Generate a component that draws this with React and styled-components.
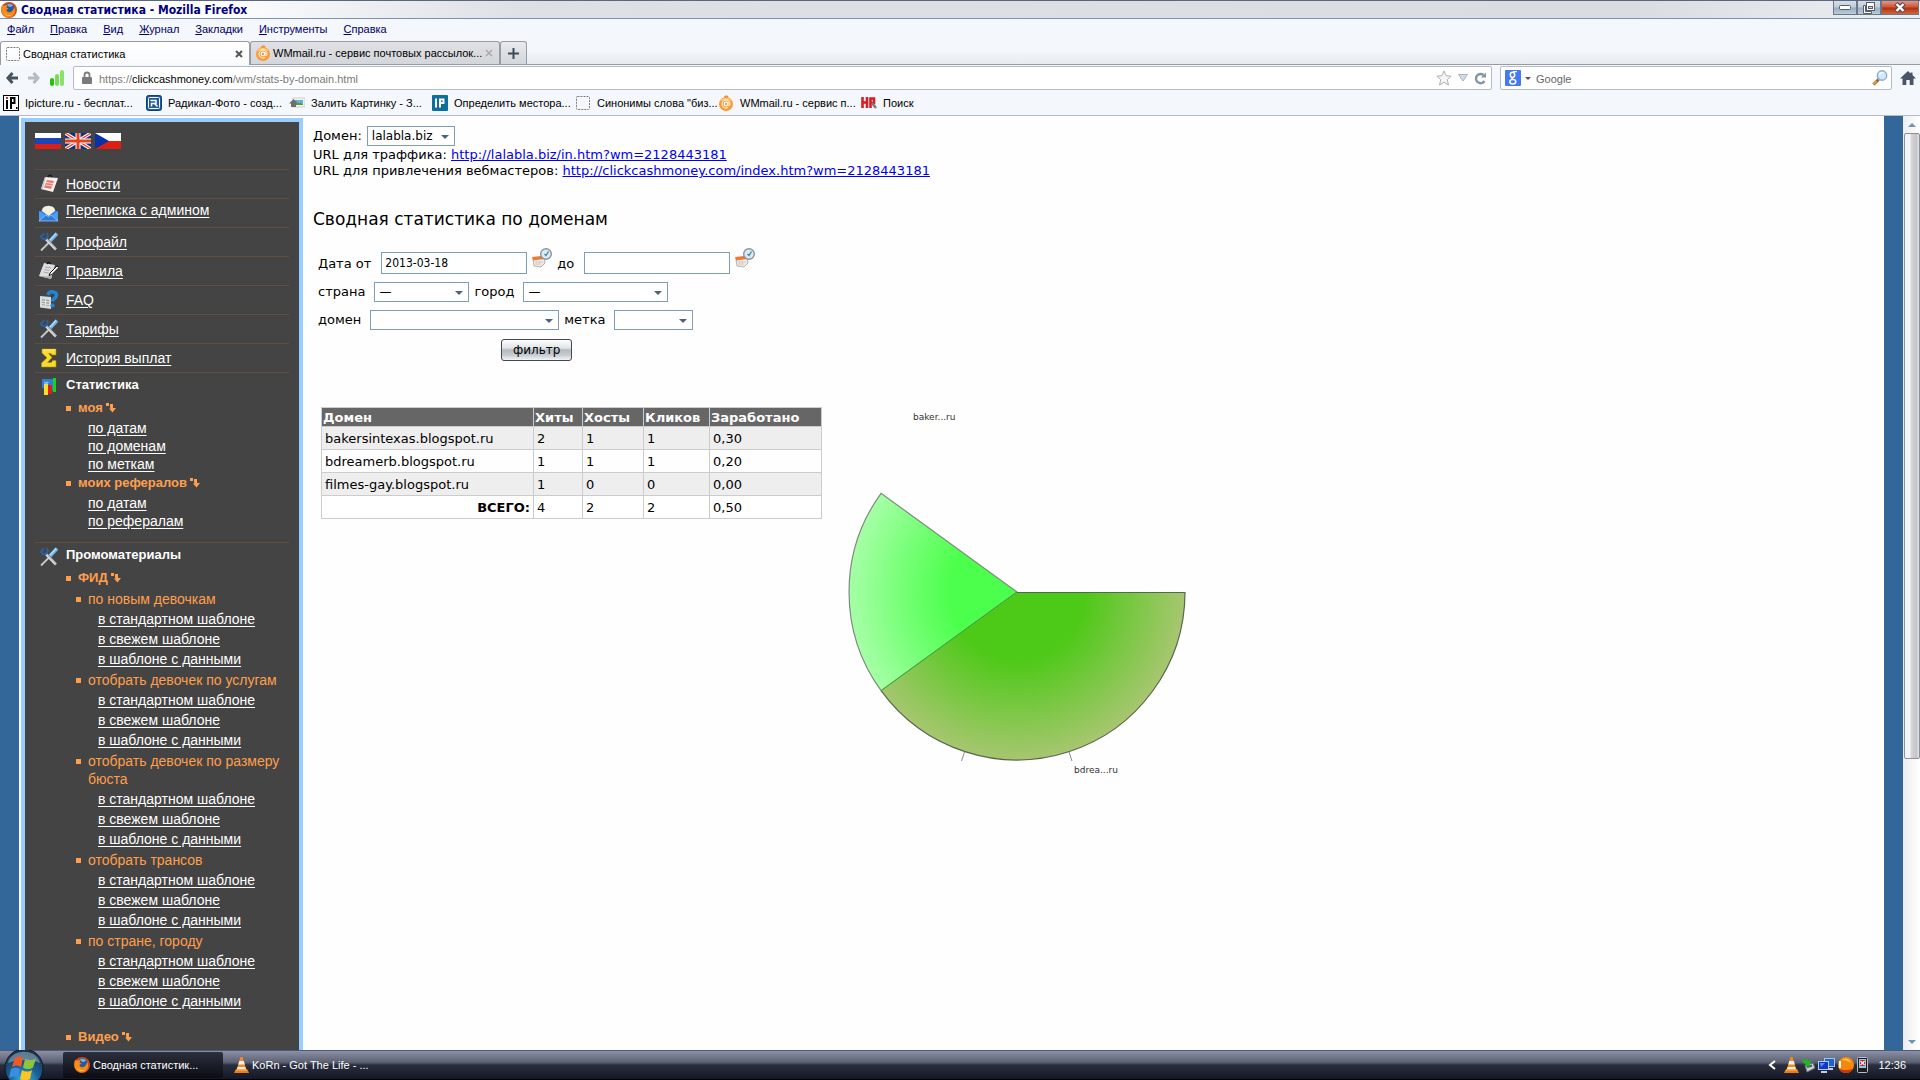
import styled, { createGlobalStyle, css } from "styled-components";

const App = () => {
  return (
    <>
      <GlobalStyle />
      <Screen>
        <BrowserHeader />
        <Viewport>
          <Strip />
          <Sidebar />
          <StatsPage />
          <Strip />
          <ScrollBar>
            <ScrollArrow $up />
            <ScrollThumb />
            <ScrollArrow />
          </ScrollBar>
        </Viewport>
        <WindowsTaskBar />
      </Screen>
    </>
  );
};

export default App;

/* ---------- data ---------- */

const MENU = ["Файл", "Правка", "Вид", "Журнал", "Закладки", "Инструменты", "Справка"];

const FEED_LINKS = ["в стандартном шаблоне", "в свежем шаблоне", "в шаблоне с данными"];

const FEED_GROUPS = [
  "по новым девочкам",
  "отобрать девочек по услугам",
  "отобрать девочек по размеру бюста",
  "отобрать трансов",
  "по стране, городу",
];

const ROWS = [
  ["bakersintexas.blogspot.ru", 2, 1, 1, "0,30"],
  ["bdreamerb.blogspot.ru", 1, 1, 1, "0,20"],
  ["filmes-gay.blogspot.ru", 1, 0, 0, "0,00"],
];

/* ---------- icons ---------- */

const FirefoxIcon = () => (
  <svg width="16" height="16" viewBox="0 0 16 16">
    <circle cx="8" cy="8" r="8" fill="#d9480f" />
    <circle cx="8.5" cy="6.5" r="5.2" fill="#27599f" />
    <path d="M6 2.5c2-1.500 5-.500 6 1l-2 1.500-2.500-.500z" fill="#6fb6e6" />
    <path
      d="M1 3c1 .5 1.500.8 2.500.8C4.500 3 5.500 3 6.500 3.300L5.500 5.500l2 1-2 1.300c0 2.200 2 3 4 2.200 2-.8 3.500-2.500 3.500-5.500 2 3 1.500 7-1 9.300C9.500 16.500 4 16 1.500 12 0 9.500 0 5.500 1 3z"
      fill="#f58a1d"
    />
    <path d="M2.500 9c1 3.500 4.500 5 8 3.800-2 2.400-6.500 1.600-8-3.800z" fill="#ffd24a" />
  </svg>
);

const BlankPageIcon = () => (
  <svg width="16" height="16" viewBox="0 0 16 16">
    <rect x="1.500" y="1.500" width="13" height="13" rx="1" fill="none" stroke="#7c7c7c" strokeDasharray="2 1" />
  </svg>
);

const MailRuIcon = () => (
  <svg width="16" height="16" viewBox="0 0 16 16">
    <path d="M6 1.500C7 0 10 0 10.500 1.500L9.500 3h-3z" fill="#f0902c" />
    <circle cx="8" cy="9" r="7" fill="#fb9b33" />
    <path d="M2 6c2-4 9-4 12 0-3-1-9-1-12 0z" fill="#ffd08a" />
    <circle cx="8" cy="9" r="1.800" fill="none" stroke="#fff" strokeWidth="1.200" />
    <path d="M10 7v3c.3 1.200 2 1 2-1A4 4 0 1 0 10 12.500" fill="none" stroke="#fff" strokeWidth="1" />
  </svg>
);

const BackIcon = ({ color }) => (
  <svg width="14" height="14" viewBox="0 0 14 14">
    <path d="M7.500 2 3 7l4.500 5M3 7h10" fill="none" stroke={color} strokeWidth="3" />
  </svg>
);

const ForwardIcon = ({ color }) => (
  <svg width="14" height="14" viewBox="0 0 14 14">
    <path d="M6.500 2 11 7l-4.500 5M11 7H1" fill="none" stroke={color} strokeWidth="3" />
  </svg>
);

const SignalIcon = () => (
  <svg width="16" height="18" viewBox="0 0 16 18">
    <rect x="1" y="9" width="4" height="8" rx="2" fill="#22c40a" />
    <rect x="6" y="5" width="4" height="12" rx="2" fill="#7bdc58" />
    <rect x="11" y="1" width="4" height="16" rx="2" fill="#8ce06c" />
  </svg>
);

const LockIcon = () => (
  <svg width="12" height="14" viewBox="0 0 12 14">
    <path d="M3.500 7V4a2.500 2.500 0 0 1 5 0v3" fill="none" stroke="#7d7d7d" strokeWidth="1.800" />
    <rect x="1" y="6" width="10" height="7" rx="1" fill="#7a7a7a" />
  </svg>
);

const StarIcon = () => (
  <svg width="16" height="16" viewBox="0 0 16 16">
    <path
      d="m8 1 2.100 4.700 5 .5-3.800 3.400L12.500 15 8 12.300 3.500 15l1.200-5.400L.9 6.200l5-.5z"
      fill="#f5f5f5"
      stroke="#b0b0b0"
    />
  </svg>
);

const DropIcon = () => (
  <svg width="10" height="8" viewBox="0 0 10 8">
    <path d="M.5.5h9L5 7z" fill="#d5dce6" stroke="#aab2be" />
  </svg>
);

const ReloadIcon = () => (
  <svg width="13" height="13" viewBox="0 0 13 13">
    <path d="M10.500 9A4.600 4.600 0 1 1 9.500 3" fill="none" stroke="#8695a3" strokeWidth="2.400" />
    <path d="M7 5.500h5V.5z" fill="#8695a3" />
  </svg>
);

const GoogleIcon = () => (
  <svg width="16" height="16" viewBox="0 0 16 16">
    <rect width="16" height="16" rx="1" fill="#4479f2" />
    <ellipse cx="7.500" cy="4.800" rx="2.200" ry="2.600" fill="none" stroke="#fff" strokeWidth="1.500" />
    <ellipse cx="7.800" cy="11.800" rx="3" ry="2.200" fill="none" stroke="#fff" strokeWidth="1.500" />
    <path d="M8 1.700h4M7 7.300c-.8 1 .5 1.700 1.500 2.300" fill="none" stroke="#fff" strokeWidth="1.200" />
  </svg>
);

const SearchIcon = () => (
  <svg width="16" height="16" viewBox="0 0 16 16">
    <path d="m1.500 14.500 5-5" stroke="#a35a1e" strokeWidth="3" />
    <path d="m1.500 14 3-3" stroke="#f19a3e" strokeWidth="2" />
    <circle cx="10" cy="5.500" r="4.700" fill="#cfe8fb" stroke="#8fa9c9" strokeWidth="1.400" />
    <path d="M7.500 5c.5-2 2-2.500 3.500-2" stroke="#fff" strokeWidth="1.400" fill="none" />
  </svg>
);

const HomeIcon = () => (
  <svg width="16" height="15" viewBox="0 0 16 15">
    <path d="M8 0 0 7.500h2.500V14h3.800V9h3.400v5h3.800V7.500H16L12.500 4V1.500h-2V2.500z" fill="#49566a" />
  </svg>
);

const IPictureIcon = () => (
  <svg width="16" height="16" viewBox="0 0 16 16">
    <rect x=".5" y=".5" width="15" height="15" fill="#fff" stroke="#000" />
    <path d="M4 5v9" stroke="#000" strokeWidth="2" />
    <rect x="3" y="2" width="2" height="2" fill="#e0202c" />
    <path d="M8 14V3h3.500v5H8" fill="none" stroke="#000" strokeWidth="2" />
    <path d="M13 13h1.500" stroke="#000" strokeWidth="2" />
  </svg>
);

const RadikalIcon = () => (
  <svg width="16" height="16" viewBox="0 0 16 16">
    <rect x=".5" y=".5" width="15" height="15" rx="2" fill="#1d5a9c" stroke="#0d3f78" />
    <rect x="2.500" y="2.500" width="11" height="11" rx="1" fill="none" stroke="#fff" />
    <path d="M4.500 5.500H10v3H5.500v3M8.500 8.500l3 3" fill="none" stroke="#fff" strokeWidth="1.500" />
  </svg>
);

const PictureIcon = () => (
  <svg width="16" height="16" viewBox="0 0 16 16">
    <rect x="4" y="3" width="12" height="9" fill="#f2f4ee" stroke="#cfd4cc" />
    <rect x="6" y="5" width="8" height="5" fill="#69aee0" />
    <path d="M6 10c2-3 6-2 8-1v1z" fill="#53a02c" />
    <path d="M0 8.500 4.500 4 9 8.500H7V12H2V8.500z" fill="#6a706a" />
  </svg>
);

const IpIcon = () => (
  <svg width="16" height="16" viewBox="0 0 16 16">
    <rect width="16" height="16" rx="1" fill="#0e6f9f" />
    <path d="M4 3.500v9M8 12.500v-8h3.500v3.500H8" fill="none" stroke="#fff" strokeWidth="2" />
  </svg>
);

const NrIcon = () => (
  <svg width="16" height="16" viewBox="0 0 16 16">
    <path d="M1.500 2v11M6 2v11M1.500 7.500H6M9.500 13V3.500h3.500V8h-3" fill="none" stroke="#dd1b22" strokeWidth="2.600" />
    <path d="m11 8 4 5" stroke="#7c7c7c" strokeWidth="2.500" />
  </svg>
);

const CalendarIcon = () => (
  <svg width="20" height="20" viewBox="0 0 20 20">
    <path d="M1 11 12 9l1 6-4 4-7-1z" fill="#efeae7" stroke="#a9a19c" strokeWidth=".8" />
    <path d="M0 9 9 8l4 1-1 2L1 12.500z" fill="#ef7a37" />
    <path d="M3.500 14h7M3.500 16h6" stroke="#bdb5b0" strokeDasharray="2 1" />
    <circle cx="14" cy="6" r="5.300" fill="#dfeaf0" stroke="#8595a1" strokeWidth="1.400" />
    <path d="m12.500 6 1.500 1.500L16.500 3.500" fill="none" stroke="#3e84a8" strokeWidth="1.300" />
  </svg>
);

const NewsIcon = () => (
  <svg width="20" height="20" viewBox="0 0 20 20">
    <path d="m6 3 13 1-5 14-12-3z" fill="#f6f1ee" />
    <path d="M2 15 6 3l1 0-3.500 12.500z" fill="#b9c4c8" />
    <path d="m8 6 7 1-3 8-7-1.500z" fill="#e9776f" />
    <path d="m7 8.500 7 1M6.500 11l6.500 1" stroke="#f9d8d4" />
    <path d="M9 3c1-2.500 3-2.500 4 0" stroke="#1c1c1c" strokeWidth="1.500" fill="none" />
  </svg>
);

const MailIcon = () => (
  <svg width="20" height="20" viewBox="0 0 20 20">
    <path d="M0 9 9.500 2 19 9v9H0z" fill="#2f7de0" />
    <path d="M3 8c0-4 3-5 6.500-5S16 4 16 8l-6.500 5z" fill="#f3f0d8" />
    <path d="m0 8 9.500 6L19 8v10H0z" fill="#4c9cf2" />
    <path d="m0 18 7-6L9.500 14l2.500-2 7 6z" fill="#2a7ae2" stroke="#9fd0ff" strokeWidth=".7" />
  </svg>
);

const ToolsIcon = () => (
  <svg width="20" height="20" viewBox="0 0 20 20">
    <path d="m2 18.500 9-9" stroke="#c4c9cf" strokeWidth="1.800" />
    <path d="m11 9 7-7.500" stroke="#6fb4ee" strokeWidth="3.500" />
    <path d="m11 8 6-6.500" stroke="#b8defa" strokeWidth="1.200" />
    <path d="m7 7 10 10.500" stroke="#b9bdc4" strokeWidth="2.600" />
    <path d="m7 8 9 9.500" stroke="#eceef0" />
    <path d="M1.500 4c1.500 0 3 0 3-3M7.500 1c2 2 1.500 4.500-.500 5.500S2.500 7 1.500 4" fill="none" stroke="#2c5f9e" strokeWidth="2" />
  </svg>
);

const RulesIcon = () => (
  <svg width="20" height="20" viewBox="0 0 20 20">
    <path d="m5 2 11 2-4 14L0 15z" fill="#dedede" />
    <path d="M0 15 12 18l1-3-2 .5z" fill="#a9a9a9" />
    <path d="m6 6 6 1M5.500 8.500l5 1M4.500 11l5 1" stroke="#a5a5a5" />
    <path d="m11 12 7-7 2 1.500-7 7-3 1z" fill="#f4f4f4" stroke="#111" />
    <path d="M8 3c1-2 2.500-2 3.500 0" stroke="#111" fill="none" strokeWidth="1.300" />
  </svg>
);

const FaqIcon = () => (
  <svg width="20" height="20" viewBox="0 0 20 20">
    <path d="m1 6 11 1v12L1 17.500z" fill="#d7dbd9" />
    <path d="m3 9 7 1v6l-7-1z" fill="#9da3a3" />
    <path d="m3 11 7 1M3 13.500l7 1M6.500 9.500v6" stroke="#e8eae9" />
    <path d="M9 5c1-4.500 9-4 8.500.5-.3 3-4 3-4 6" fill="none" stroke="#1f86d8" strokeWidth="3.500" />
    <circle cx="13.500" cy="15.500" r="2.100" fill="#1f86d8" />
  </svg>
);

const SigmaIcon = () => (
  <svg width="20" height="20" viewBox="0 0 20 20">
    <path d="M3 1h14v6h-4l-1-1.500H9.500L13 9.500l-4.500 5h4l1-2h3.500v6.500H2.500v-4L8 9.800 3 5z" fill="#f7dc2a" stroke="#b58d0c" strokeWidth=".6" />
    <path d="M3.500 2h13" stroke="#fff08a" />
  </svg>
);

const StatsIcon = () => (
  <svg width="20" height="20" viewBox="0 0 20 20">
    <path d="M3 2h12v12L3 11z" fill="#2f7fd6" />
    <path d="M5 4c2 2 3 0 5 1l-4 5z" fill="#7dc4f5" />
    <rect x="14" y="1" width="3" height="14" fill="#17d21f" />
    <rect x="9" y="8" width="4" height="9" fill="#dc1f17" />
    <rect x="5" y="7" width="4" height="11" fill="#f6e02a" />
  </svg>
);

const TurnIcon = () => (
  <svg width="10" height="10" viewBox="0 0 10 10">
    <path d="M0 0h3v3H0zM4 1h3v4h3L6.500 9.500 3 5.500h1.500L4 4z" fill="#ff9f4d" />
  </svg>
);

const RuFlag = () => (
  <svg width="26" height="16" viewBox="0 0 26 16">
    <path fill="#fff" d="M0 0h26v6H0z" />
    <path fill="#1e45b8" d="M0 5h26v6H0z" />
    <path fill="#dd1f12" d="M0 11h26v5H0z" />
  </svg>
);

const UkFlag = () => (
  <svg width="26" height="16" viewBox="0 0 26 16">
    <path fill="#12307e" d="M0 0h26v16H0z" />
    <path d="m0 0 26 16M26 0 0 16" stroke="#fff" strokeWidth="3.500" />
    <path d="m0 0 26 16M26 0 0 16" stroke="#e23b22" strokeWidth="1.200" />
    <path d="M13 0v16M0 8h26" stroke="#fff" strokeWidth="5" />
    <path d="M13 0v16M0 8h26" stroke="#e8401f" strokeWidth="3" />
  </svg>
);

const CzFlag = () => (
  <svg width="26" height="16" viewBox="0 0 26 16">
    <path fill="#fff" d="M0 0h26v8H0z" />
    <path fill="#dd1f12" d="M0 8h26v8H0z" />
    <path fill="#0b32a4" d="m0 0 14 8-14 8z" />
  </svg>
);

const VlcIcon = () => (
  <svg width="15" height="16" viewBox="0 0 15 16">
    <path d="M6.500 0h2l4 13h-10z" fill="#f58a1a" />
    <path d="m5.300 4-1 3.500h6.500l-1-3.500zM3.600 10l-.6 2.500h9l-.8-2.500z" fill="#eef0f2" />
    <path d="M1.500 12.500h12L15 16H0z" fill="#ee7c12" />
    <path d="M2 13h11" stroke="#ffbc5c" />
  </svg>
);

const StartOrb = () => (
  <svg width="40" height="30" viewBox="0 0 40 30">
    <defs>
      <radialGradient id="orb" cx="50%" cy="85%" r="80%">
        <stop offset="0" stopColor="#35c2f0" />
        <stop offset=".5" stopColor="#1c5f94" />
        <stop offset="1" stopColor="#1c3148" />
      </radialGradient>
    </defs>
    <circle cx="20" cy="18" r="19" fill="url(#orb)" stroke="#0c1828" />
    <path d="M4 13C7-2 33-2 36 13c-9-4-22-4-32 0z" fill="#8fa9bd" opacity=".6" />
    <path d="M11 8c3-2 5-2 8 0l-2 9c-3-2-6-2-9 0z" fill="#ee5a24" />
    <path d="M21 9c3 1.500 7 1.500 11-.500l-3 9c-3 2-7 2-10 0z" fill="#8cc63e" />
    <path d="M7 19c3-2 6-2 9 0l-2 9c-3-2-6-2-9 0z" fill="#3a8ee0" />
    <path d="M18 20c3 2 7 2 10 0l-2 9c-3 2-7 2-10 0z" fill="#fcc51f" />
  </svg>
);

const UsbIcon = () => (
  <svg width="13" height="16" viewBox="0 0 13 16">
    <path d="m3 8 8-2 2 5-8 4z" fill="#c9ccd2" stroke="#6c7078" />
    <path d="m5 10 5-1.500" stroke="#555" strokeWidth="2" />
    <path d="m0 2 3 1 2-2 1 3 3-1-1 6-5 1 1-3-3-1z" fill="#22b32a" />
  </svg>
);

const NetworkIcon = () => (
  <svg width="17" height="16" viewBox="0 0 17 16">
    <rect x="6.500" y="1.500" width="10" height="8" fill="#1f62d2" stroke="#a5c4e8" />
    <rect x=".5" y="4.500" width="10" height="8" fill="#1238c8" stroke="#b4ccec" />
    <path d="M2 6h5l-4 4z" fill="#5b8df0" />
    <path d="M3 15h6M11 12h4" stroke="#c6cedb" strokeWidth="2" />
  </svg>
);

const OrangeIcon = () => (
  <svg width="16" height="16" viewBox="0 0 16 16">
    <circle cx="8" cy="8" r="8" fill="#f8850c" />
    <path d="M1 11.500c3 6 11 6 14 0-4 2-10 2-14 0z" fill="#c8380c" />
    <path d="M4 3c4-3 8-1 9 3-3-2-6-3-9-3z" fill="#ffc93f" />
    <path d="M2 4v7" stroke="#fff" strokeWidth="2" />
  </svg>
);

const PhoneIcon = () => (
  <svg width="11" height="16" viewBox="0 0 11 16">
    <rect x=".5" y=".5" width="10" height="15" rx="1" fill="#1c1c1e" stroke="#b9bcc2" />
    <rect x="2" y="2" width="7" height="9" fill="#8fc4f5" />
    <rect x="3" y="3" width="5" height="6" fill="#d5161c" />
    <path d="m3.500 4 4 4M7.500 4l-4 4" stroke="#fff" strokeWidth="1.300" />
  </svg>
);

const BOOKMARKS = [
  [<IPictureIcon />, "Ipicture.ru - бесплат..."],
  [<RadikalIcon />, "Радикал-Фото - созд..."],
  [<PictureIcon />, "Залить Картинку - З..."],
  [<IpIcon />, "Определить местора..."],
  [<BlankPageIcon />, 'Синонимы слова "биз...'],
  [<MailRuIcon />, "WMmail.ru - сервис п..."],
  [<NrIcon />, "Поиск"],
];

const NAV = [
  [<NewsIcon />, "Новости"],
  [<MailIcon />, "Переписка с админом", true],
  [<ToolsIcon />, "Профайл"],
  [<RulesIcon />, "Правила"],
  [<FaqIcon />, "FAQ"],
  [<ToolsIcon />, "Тарифы"],
  [<SigmaIcon />, "История выплат"],
];

/* ---------- browser window ---------- */

const BrowserHeader = () => (
  <header>
    <TitleBar>
      <FirefoxIcon />
      <WindowTitle>Сводная статистика - Mozilla Firefox</WindowTitle>
      <WindowButtons>
        <WindowButton aria-label="Свернуть">
          <svg width="12" height="6" viewBox="0 0 12 6">
            <rect x=".5" y=".5" width="11" height="4" rx="1" fill="#fff" stroke="#555b6b" />
          </svg>
        </WindowButton>
        <WindowButton aria-label="Восстановить">
          <svg width="12" height="12" viewBox="0 0 12 12">
            <path d="M.5 3.500v8h8v-2h-6v-6z" fill="#fff" stroke="#555b6b" />
            <rect x="3.500" y=".5" width="8" height="8" fill="#fff" stroke="#555b6b" />
            <rect x="5.500" y="4.500" width="4" height="2" fill="#cfdae3" stroke="#555b6b" />
          </svg>
        </WindowButton>
        <WindowButton $close aria-label="Закрыть">
          <svg width="12" height="11" viewBox="0 0 12 11">
            <path d="m2 1.500 8 8M10 1.500l-8 8" stroke="#5b4750" strokeWidth="4.500" />
            <path d="m2.500 2 7 7M9.500 2l-7 7" stroke="#fff" strokeWidth="2.400" />
          </svg>
        </WindowButton>
      </WindowButtons>
    </TitleBar>

    <MenuBar>
      {MENU.map((name) => (
        <MenuItem key={name}>
          <u>{name[0]}</u>
          {name.slice(1)}
        </MenuItem>
      ))}
    </MenuBar>

    <TabBar>
      <Tab $active>
        <BlankPageIcon />
        <TabTitle>Сводная статистика</TabTitle>
        <TabClose aria-label="Закрыть вкладку">
          <svg width="8" height="8" viewBox="0 0 8 8">
            <path d="m1 1 6 6M7 1 1 7" stroke="#555" strokeWidth="2" />
          </svg>
        </TabClose>
      </Tab>
      <Tab>
        <MailRuIcon />
        <TabTitle>WMmail.ru - сервис почтовых рассылок...</TabTitle>
        <TabClose aria-label="Закрыть вкладку">
          <svg width="8" height="8" viewBox="0 0 8 8">
            <path d="m1 1 6 6M7 1 1 7" stroke="#aaa" strokeWidth="1.500" />
          </svg>
        </TabClose>
      </Tab>
      <NewTab aria-label="Новая вкладка">
        <svg width="11" height="11" viewBox="0 0 11 11">
          <path d="M5.500 0v11M0 5.500h11" stroke="#3c4a5e" strokeWidth="2" />
        </svg>
      </NewTab>
    </TabBar>

    <NavBar>
      <NavButtons>
        <IconButton aria-label="Назад">
          <BackIcon color="#46535f" />
        </IconButton>
        <IconButton aria-label="Вперёд">
          <ForwardIcon color="#b4bbc3" />
        </IconButton>
        <SignalIcon />
      </NavButtons>
      <UrlBox>
        <LockIcon />
        <UrlText role="textbox" aria-label="Адрес">
          https://<b>clickcashmoney.com</b>/wm/stats-by-domain.html
        </UrlText>
        <StarIcon />
        <DropIcon />
        <ReloadIcon />
      </UrlBox>
      <SearchBox>
        <GoogleIcon />
        <SmallArrow />
        <SearchInput aria-label="Поиск" placeholder="Google" />
        <SearchIcon />
      </SearchBox>
      <IconButton aria-label="Домой">
        <HomeIcon />
      </IconButton>
    </NavBar>

    <BookmarkBar>
      {BOOKMARKS.map(([icon, name]) => (
        <Bookmark key={name} href="#">
          {icon}
          {name}
        </Bookmark>
      ))}
    </BookmarkBar>
  </header>
);

/* ---------- left menu ---------- */

const Sidebar = () => (
  <SidebarBox>
    <Flags>
      <RuFlag />
      <UkFlag />
      <CzFlag />
    </Flags>
    {NAV.map(([icon, name, raised]) => (
      <NavRow key={name}>
        {icon}
        <NavLink href="#" $raised={raised}>
          {name}
        </NavLink>
      </NavRow>
    ))}

    <Section>
      <StatsIcon />
      <div>
        <SectionTitle>Статистика</SectionTitle>
        <SubTitle>
          моя <TurnIcon />
        </SubTitle>
        <SubList>
          <NavLink href="#">по датам</NavLink>
          <NavLink href="#">по доменам</NavLink>
          <NavLink href="#">по меткам</NavLink>
        </SubList>
        <SubTitle>
          моих рефералов <TurnIcon />
        </SubTitle>
        <SubList>
          <NavLink href="#">по датам</NavLink>
          <NavLink href="#">по рефералам</NavLink>
        </SubList>
      </div>
    </Section>

    <Section>
      <ToolsIcon />
      <div>
        <SectionTitle>Промоматериалы</SectionTitle>
        <SubTitle>
          ФИД <TurnIcon />
        </SubTitle>
        <FeedList>
          {FEED_GROUPS.map((group) => (
            <div key={group}>
              <FeedTitle>{group}</FeedTitle>
              {FEED_LINKS.map((link) => (
                <FeedLink key={link} href="#">
                  {link}
                </FeedLink>
              ))}
            </div>
          ))}
        </FeedList>
        <SubTitle>
          Видео <TurnIcon />
        </SubTitle>
      </div>
    </Section>
  </SidebarBox>
);

/* ---------- page ---------- */

const SelectField = ({ id, label, value, width, site }) => (
  <Field $site={site}>
    <label htmlFor={id}>{label}</label>
    <SelectWrap $width={width}>
      <Select id={id} defaultValue={value}>
        <option>{value}</option>
      </Select>
    </SelectWrap>
  </Field>
);

const DateField = ({ id, label, value }) => (
  <DateRow>
    <label htmlFor={id}>{label}</label>
    <TextInput id={id} type="text" defaultValue={value} />
    <DateButton type="button" aria-label="Календарь">
      <CalendarIcon />
    </DateButton>
  </DateRow>
);

const StatsPage = () => (
  <Main>
    <SelectField site id="site" label="Домен:" value="lalabla.biz" width={88} />
    <Line>
      URL для траффика: <a href="#in">http://lalabla.biz/in.htm?wm=2128443181</a>
    </Line>
    <Line>
      URL для привлечения вебмастеров: <a href="#wm">http://clickcashmoney.com/index.htm?wm=2128443181</a>
    </Line>
    <Heading>Сводная статистика по доменам</Heading>

    <Filter>
      <FilterRow>
        <DateField id="from" label="Дата от" value="2013-03-18" />
        <DateField id="to" label="до" value="" />
      </FilterRow>
      <FilterRow>
        <SelectField id="country" label="страна" value="—" width={95} />
        <SelectField id="city" label="город" value="—" width={145} />
      </FilterRow>
      <FilterRow>
        <SelectField id="domain" label="домен" value="" width={189} />
        <SelectField id="mark" label="метка" value="" width={79} />
      </FilterRow>
      <FilterButton type="button">фильтр</FilterButton>
    </Filter>

    <Results>
      <Table>
        <colgroup>
          <Col $width={212} />
          <Col $width={49} />
          <Col $width={61} />
          <Col $width={66} />
          <Col $width={112} />
        </colgroup>
        <thead>
          <tr>
            {["Домен", "Хиты", "Хосты", "Кликов", "Заработано"].map((name) => (
              <Th key={name}>{name}</Th>
            ))}
          </tr>
        </thead>
        <tbody>
          {ROWS.map((row) => (
            <Tr key={row[0]}>
              {row.map((cell, i) => (
                <Td key={i}>{cell}</Td>
              ))}
            </Tr>
          ))}
          <Tr>
            <Td $total>ВСЕГО:</Td>
            <Td>4</Td>
            <Td>2</Td>
            <Td>2</Td>
            <Td>0,50</Td>
          </Tr>
        </tbody>
      </Table>
      <PieChart />
    </Results>
  </Main>
);

const PieChart = () => (
  <Chart width="370" height="375" viewBox="0 0 370 375">
    <defs>
      <radialGradient id="light" gradientUnits="userSpaceOnUse" cx="185" cy="185" r="168">
        <stop offset=".4" stopColor="#4cff4c" />
        <stop offset="1" stopColor="#a6ffa6" />
      </radialGradient>
      <radialGradient id="olive" gradientUnits="userSpaceOnUse" cx="185" cy="185" r="168">
        <stop offset=".4" stopColor="#4dc917" />
        <stop offset="1" stopColor="#a7c670" />
      </radialGradient>
    </defs>
    <path d="M185 185 49.100 283.700A168 168 0 0 1 49.100 86.300z" fill="url(#light)" stroke="#7c8c7c" strokeWidth="1.200" />
    <path d="M185 185.500H353A168 168 0 0 1 49.100 283.700z" fill="url(#olive)" />
    <path d="M185 185.500H353A168 168 0 0 1 49.100 283.700" fill="none" stroke="#56684a" strokeWidth="1.200" />
    <path d="M49.100 283.700 185 185" stroke="#2fae2a" />
    <path d="m132.500 345-3 9M237 345l3 9" stroke="#8a8a8a" />
    <text x="81" y="13">baker...ru</text>
    <text x="242" y="366">bdrea...ru</text>
  </Chart>
);

/* ---------- taskbar ---------- */

const WindowsTaskBar = () => (
  <TaskBar>
    <StartButton aria-label="Пуск">
      <StartOrb />
    </StartButton>
    <TaskButton $active>
      <FirefoxIcon />
      Сводная статистик...
    </TaskButton>
    <TaskButton>
      <VlcIcon />
      KoRn - Got The Life - ...
    </TaskButton>
    <Tray>
      <svg width="8" height="10" viewBox="0 0 8 10">
        <path d="M7 1 2 5l5 4" fill="none" stroke="#fff" strokeWidth="2" />
      </svg>
      <TrayIcons>
        <VlcIcon />
        <UsbIcon />
        <NetworkIcon />
        <OrangeIcon />
        <PhoneIcon />
      </TrayIcons>
      <time>12:36</time>
    </Tray>
  </TaskBar>
);

/* ---------- styles ---------- */

const GlobalStyle = createGlobalStyle`
  * {
    box-sizing: border-box;
  }
  body {
    margin: 0;
    overflow: hidden;
    background: #fefefe;
  }
  svg {
    display: block;
    flex: none;
  }
  button {
    padding: 0;
    border: 0;
    background: none;
    font: inherit;
  }
`;

const chromeFont = css`
  font: 11px/14px "Liberation Sans", Arial, sans-serif;
`;

const pageFont = css`
  font: 13px/16px "DejaVu Sans", Verdana, sans-serif;
`;

const flexAlignCenter = css`
  display: flex;
  align-items: center;
`;

const Screen = styled.div`
  display: flex;
  flex-direction: column;
  height: 100vh;
  ${chromeFont};
`;

const TitleBar = styled.div`
  ${flexAlignCenter};
  height: 19px;
  padding: 0 1px;
  border-top: 1px solid #5a6680;
  border-bottom: 1px solid #7893b5;
  background: linear-gradient(90deg, #fff 0, #fff 200px, #dde0e5 520px, #d9dde2 85%, #eceef1 100%);
`;

const WindowTitle = styled.span`
  flex: 1;
  padding-left: 4px;
  font: bold 12px/16px "DejaVu Sans Condensed", sans-serif;
  color: #000080;
`;

const WindowButtons = styled.div`
  display: flex;
  align-self: flex-start;
`;

const WindowButton = styled.button`
  display: flex;
  align-items: center;
  justify-content: center;
  width: ${({ $close }) => ($close ? 38 : 24)}px;
  height: 14px;
  border: 1px solid #6b7786;
  border-top: 0;
  background: ${({ $close }) =>
    $close
      ? "linear-gradient(#dd9a8c, #cf5638 45%, #b52f12 55%, #cc6a3e)"
      : "linear-gradient(#d5dee6, #c0cfdb 45%, #98aec2 55%, #b9cddb)"};
`;

const MenuBar = styled.nav`
  ${flexAlignCenter};
  gap: 16px;
  height: 22px;
  padding: 0 7px 2px;
  background: #f4f7fc;
`;

const MenuItem = styled.button`
  color: #000066;
`;

const TabBar = styled.div`
  display: flex;
  align-items: stretch;
  height: 24px;
  border-bottom: 1px solid #989ba2;
  background: linear-gradient(#f4f7fc 40%, #e7eaee);
`;

const Tab = styled.div`
  ${flexAlignCenter};
  gap: 2px;
  width: 250px;
  padding: 0 6px 0 4px;
  border: 1px solid #989ba2;
  border-bottom: 0;
  border-radius: 3px 3px 0 0;
  margin-bottom: ${({ $active }) => ($active ? -1 : 0)}px;
  background: ${({ $active }) => ($active ? "linear-gradient(#fff, #f8fafd)" : "linear-gradient(#dfe1e4, #d3d6da)")};
`;

const TabTitle = styled.span`
  flex: 1;
  min-width: 0;
  white-space: nowrap;
`;

const TabClose = styled.button`
  flex: none;
`;

const NewTab = styled.button`
  ${flexAlignCenter};
  justify-content: center;
  width: 27px;
  border: 1px solid #989ba2;
  border-bottom: 0;
  border-radius: 3px 3px 0 0;
  background: linear-gradient(#e8eaed, #d3d6da);
`;

const NavBar = styled.div`
  ${flexAlignCenter};
  gap: 8px;
  height: 26px;
  padding: 0 4px 0 5px;
  background: #f4f7fc;
`;

const NavButtons = styled.div`
  ${flexAlignCenter};
  gap: 8px;
  width: 60px;
`;

const IconButton = styled.button`
  display: block;
`;

const UrlBox = styled.div`
  ${flexAlignCenter};
  gap: 6px;
  flex: 1;
  height: 24px;
  padding: 0 4px 0 7px;
  border: 1px solid #b4bccb;
  border-radius: 2px;
  background: #fff;
`;

const UrlText = styled.div`
  flex: 1;
  padding-top: 2px;
  color: #7a7a7a;

  b {
    font-weight: normal;
    color: #000;
  }
`;

const SearchBox = styled.div`
  ${flexAlignCenter};
  gap: 4px;
  width: 392px;
  height: 24px;
  padding: 0 3px 0 4px;
  border: 1px solid #b4bccb;
  border-radius: 2px;
  background: #fff;
`;

const SmallArrow = styled.span`
  border: 3px solid transparent;
  border-top-color: #555;
  border-bottom: 0;
`;

const SearchInput = styled.input`
  flex: 1;
  border: 0;
  outline: 0;
  padding: 2px 1px 0;
  font: inherit;

  &::placeholder {
    color: #666;
    opacity: 1;
  }
`;

const BookmarkBar = styled.div`
  ${flexAlignCenter};
  height: 25px;
  padding: 0 3px;
  border-bottom: 1px solid #b4bccb;
  background: #f4f7fc;
`;

const Bookmark = styled.a`
  ${flexAlignCenter};
  gap: 6px;
  width: 143px;
  color: #000;
  text-decoration: none;
  white-space: nowrap;
`;

const Viewport = styled.div`
  display: flex;
  flex: 1;
  min-height: 0;
`;

const Strip = styled.div`
  flex: none;
  width: 19px;
  background: #336699;
`;

const SidebarBox = styled.aside`
  flex: none;
  width: 282px;
  margin: 2px 0 0 2px;
  padding: 11px 10px 0;
  border: 4px solid #99ccff;
  border-bottom: 0;
  background: #444;
  font: 14px/18px "Liberation Sans", Arial, sans-serif;
  color: #fff;
  overflow: hidden;
`;

const Flags = styled.div`
  display: flex;
  gap: 4px;
  margin-bottom: 20px;
`;

const NavRow = styled.div`
  ${flexAlignCenter};
  gap: 7px;
  height: 29px;
  padding-left: 4px;
  border-top: 1px solid #5f4e46;
`;

const NavLink = styled.a`
  display: block;
  color: #fff;
  text-underline-offset: 2px;
  margin-bottom: ${({ $raised }) => ($raised ? 6 : 0)}px;
`;

const Section = styled.section`
  display: flex;
  align-items: flex-start;
  gap: 7px;
  padding: 3px 0 11px 4px;
  border-top: 1px solid #5f4e46;

  > svg {
    margin-top: 1px;
  }
`;

const SectionTitle = styled.h2`
  height: 23px;
  margin: 0;
  font: bold 13px/18px "Liberation Sans", Arial, sans-serif;
`;

const SubTitle = styled.h3`
  ${flexAlignCenter};
  gap: 3px;
  margin: 0 0 2px;
  font: bold 13px/18px "Liberation Sans", Arial, sans-serif;
  color: #ff9f4d;

  &::before {
    content: "";
    width: 5px;
    height: 5px;
    margin-right: 4px;
    background: #ff9f4d;
  }
`;

const SubList = styled.div`
  padding: 0 0 1px 22px;
`;

const FeedList = styled.div`
  display: flex;
  flex-direction: column;
  gap: 2px;
  padding: 1px 0 17px 22px;
`;

const FeedTitle = styled.div`
  display: flex;
  align-items: flex-start;
  gap: 7px;
  margin: 0 0 1px -12px;
  color: #ff9f4d;

  &::before {
    content: "";
    flex: none;
    width: 5px;
    height: 5px;
    margin-top: 7px;
    background: #ff9f4d;
  }
`;

const FeedLink = styled(NavLink)`
  padding-left: 10px;
  line-height: 20px;
`;

const Main = styled.main`
  flex: 1;
  min-width: 0;
  padding: 10px;
  background: #fefefe;
  ${pageFont};
  color: #000;
  overflow: hidden;
`;

const Line = styled.div`
  a {
    color: #0000ee;
  }
`;

const Heading = styled.h1`
  margin: 29px 0 18px;
  font: 17px/22px "DejaVu Sans", Verdana, sans-serif;
`;

const Field = styled.div`
  ${flexAlignCenter};
  gap: ${({ $site }) => ($site ? 5 : 9)}px;
  height: 20px;
  margin-bottom: ${({ $site }) => ($site ? 1 : 0)}px;
`;

const DateRow = styled.div`
  display: flex;
  align-items: flex-end;
  gap: 5px;
  height: 26px;

  label {
    margin: 0 5px 2px 0;
  }
`;

const SelectWrap = styled.div`
  position: relative;
  width: ${({ $width }) => $width}px;

  &::after {
    content: "";
    position: absolute;
    top: 9px;
    right: 6px;
    border: 4px solid transparent;
    border-top-color: #4d6185;
    border-bottom: 0;
    pointer-events: none;
  }
`;

const Select = styled.select`
  display: block;
  appearance: none;
  width: 100%;
  height: 20px;
  padding: 0 4px;
  border: 1px solid #7f9db9;
  border-radius: 0;
  background: #fff;
  color: #000;
  font: 12px/16px "DejaVu Sans", Verdana, sans-serif;
`;

const TextInput = styled.input`
  width: 146px;
  height: 22px;
  padding: 0 3px;
  border: 1px solid #7f9db9;
  background: #fff;
  font: 12px/16px "DejaVu Sans Condensed", Tahoma, sans-serif;
`;

const DateButton = styled.button`
  align-self: flex-start;
`;

const Filter = styled.form`
  display: inline-flex;
  flex-direction: column;
  gap: 8px;
  padding-left: 5px;
`;

const FilterRow = styled.div`
  display: flex;
  gap: 5px;
`;

const FilterButton = styled.button`
  align-self: center;
  width: 71px;
  height: 22px;
  margin-top: 1px;
  border: 1px solid #42484f;
  border-radius: 3px;
  background: linear-gradient(#fdfdfd, #e2e4e6 40%, #b5bbc1 50%, #c6cbd0 75%, #f4f6f7);
  font: 12px/16px "DejaVu Sans", Verdana, sans-serif;
  color: #000;
`;

const Results = styled.div`
  display: flex;
  align-items: flex-start;
  gap: 10px;
  margin-top: 46px;
  padding-left: 8px;
`;

const Table = styled.table`
  flex: none;
  width: 501px;
  table-layout: fixed;
  border-collapse: collapse;
`;

const Col = styled.col`
  width: ${({ $width }) => $width}px;
`;

const Th = styled.th`
  height: 19px;
  padding: 2px 1px 0;
  border: 1px solid #ccc;
  background: #666;
  color: #fff;
  text-align: left;
`;

const Tr = styled.tr`
  &:nth-child(odd) {
    background: #eee;
  }
  &:last-child {
    background: #fff;
  }
`;

const Td = styled.td`
  height: 23px;
  padding: 4px 3px 2px;
  border: 1px solid #ccc;
  text-align: ${({ $total }) => ($total ? "right" : "left")};
  font-weight: ${({ $total }) => ($total ? "bold" : "normal")};
`;

const Chart = styled.svg`
  font: 9px "DejaVu Sans", Verdana, sans-serif;
  fill: #333;
`;

const ScrollBar = styled.div`
  display: flex;
  flex-direction: column;
  flex: none;
  width: 17px;
  background: linear-gradient(90deg, #ededed, #fff);
`;

const ScrollArrow = styled.div`
  display: flex;
  align-items: center;
  justify-content: center;
  height: 17px;
  margin-top: ${({ $up }) => ($up ? "0" : "auto")};

  &::before {
    content: "";
    border: 4px solid transparent;
    ${({ $up }) => ($up ? "border-bottom-color: #6f94ae; border-top: 0" : "border-top-color: #6f94ae; border-bottom: 0")};
  }
`;

const ScrollThumb = styled.div`
  height: 67%;
  margin-left: 1px;
  border: 1px solid #8f8f8f;
  border-radius: 2px;
  background: linear-gradient(90deg, #f5f5f5 35%, #d5d6d9 45%, #c3c4c8 80%, #e5e5e7);
`;

const TaskBar = styled.footer`
  ${flexAlignCenter};
  flex: none;
  height: 30px;
  border-top: 1px solid #4c587c;
  border-bottom: 1px solid #000;
  background: linear-gradient(#8b90a4 0, #5c6173 40%, #3f4456 46%, #2a2e3e 50%, #141725 100%);
  color: #fff;
`;

const StartButton = styled.button`
  width: 63px;
  padding-left: 4px;
`;

const TaskButton = styled.button`
  ${flexAlignCenter};
  gap: 3px;
  width: 160px;
  height: 26px;
  padding: 0 11px;
  border-radius: 2px;
  background: ${({ $active }) => ($active ? "linear-gradient(#2c303c, #1b1e28 50%, #0b0d14)" : "none")};
  color: #fff;
  white-space: nowrap;
`;

const Tray = styled.div`
  ${flexAlignCenter};
  gap: 8px;
  margin-left: auto;
  padding-right: 14px;

  time {
    padding-left: 2px;
  }
`;

const TrayIcons = styled.div`
  ${flexAlignCenter};
  gap: 3px;
`;
